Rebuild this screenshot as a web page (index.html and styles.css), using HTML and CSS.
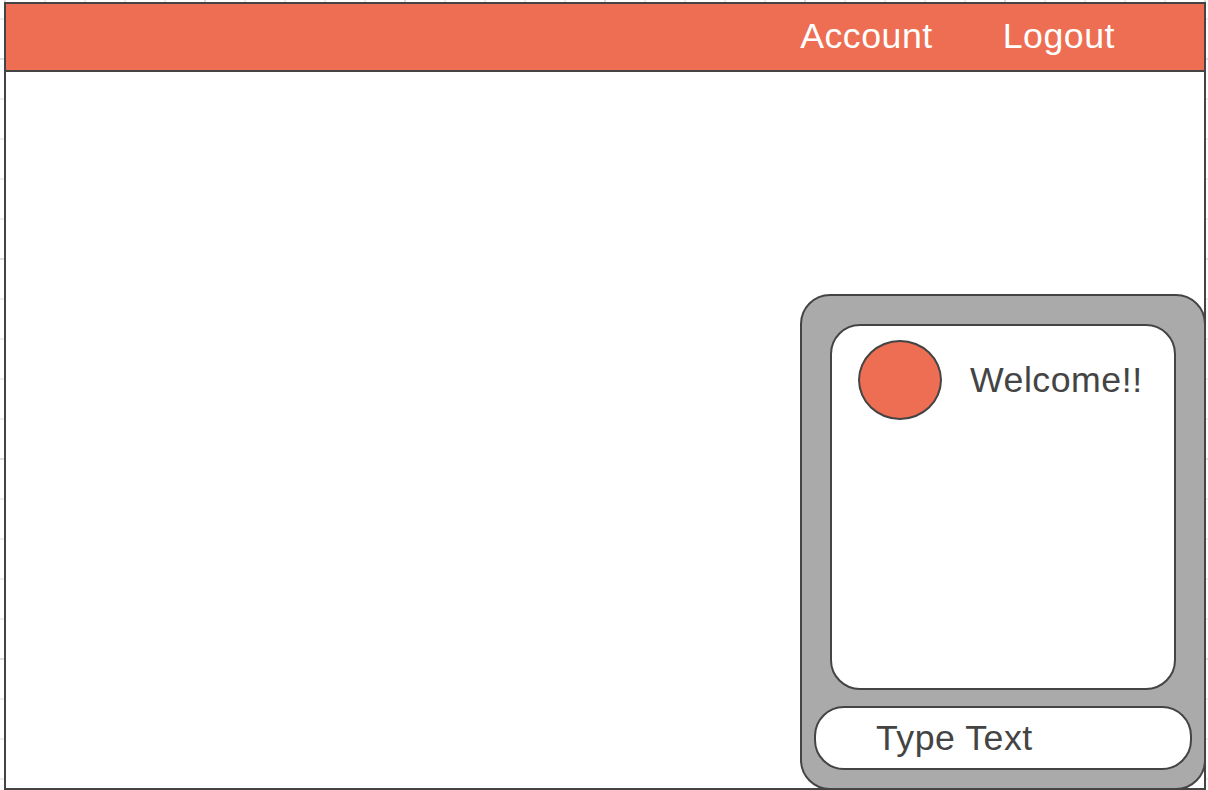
FILE: index.html
```html
<!DOCTYPE html>
<html lang="en">
<head>
<meta charset="utf-8">
<title>Chat</title>
<link rel="stylesheet" href="styles.css">
</head>
<body>
<div class="frame">
  <header class="topbar">
    <nav class="nav">
      <a class="nav-link">Account</a>
      <a class="nav-link">Logout</a>
    </nav>
  </header>
  <main class="content">
    <section class="chat">
      <div class="messages">
        <div class="message">
          <span class="avatar"></span>
          <span class="message-text">Welcome!!</span>
        </div>
      </div>
      <div class="composer">Type Text</div>
    </section>
  </main>
</div>
</body>
</html>
```

FILE: styles.css
```css
* { box-sizing: border-box; }

body {
  margin: 0;
  width: 1208px;
  height: 790px;
  padding: 2px 2px 0 4px;
  overflow: hidden;
  font: 35.7px/42px "Liberation Sans", Arial, sans-serif;
  letter-spacing: 0.52px;
  color: #444;
  background-color: #fff;
  background-image:
    linear-gradient(to right, #dfdfe2 2px, transparent 2px),
    linear-gradient(to bottom, #dfdfe2 2px, transparent 2px),
    linear-gradient(to right, #ededf0 2px, transparent 2px),
    linear-gradient(to bottom, #ededf0 2px, transparent 2px);
  background-size: 200px 100%, 100% 200px, 40px 100%, 100% 40px;
  background-position: 4px 0, 0 58px, 4px 0, 0 18px;
}

.frame {
  display: flex;
  flex-direction: column;
  height: 788px;
  border: 2px solid #444;
  background: #fff;
}

.topbar {
  display: flex;
  justify-content: flex-end;
  align-items: center;
  height: 68px;
  padding: 0 89px 2px 0;
  border-bottom: 2px solid #444;
  background: #ed6e52;
}

.nav {
  display: flex;
  gap: 70px;
}

.nav-link { color: #fff; }

.content {
  display: flex;
  flex: 1;
  justify-content: flex-end;
  align-items: flex-end;
}

.chat {
  display: flex;
  flex-direction: column;
  gap: 16px;
  width: 406px;
  height: 496px;
  margin: 0 -2px -2px 0;
  padding: 28px 12px 18px;
  border: 2px solid #444;
  border-radius: 30px;
  background: #aaa;
}

.messages {
  flex: 1;
  margin: 0 16px;
  padding: 14px 26px;
  border: 2px solid #444;
  border-radius: 30px;
  background: #fff;
}

.message {
  display: flex;
  align-items: center;
  gap: 28px;
}

.avatar {
  flex: none;
  width: 84px;
  height: 80px;
  border: 2px solid #444;
  border-radius: 50%;
  background: #ed6e52;
}

.composer {
  display: flex;
  align-items: center;
  height: 64px;
  padding-left: 60px;
  border: 2px solid #444;
  border-radius: 30px;
  background: #fff;
}
```
